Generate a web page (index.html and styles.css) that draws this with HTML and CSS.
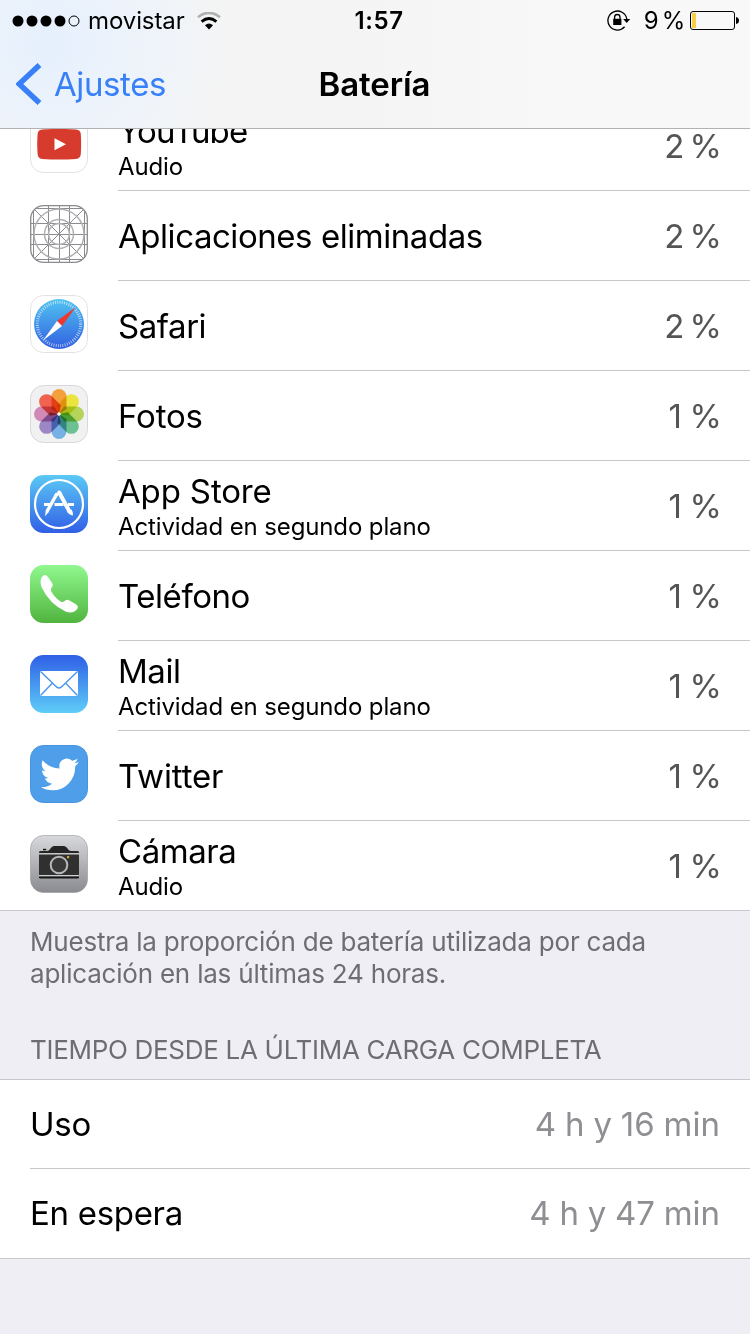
FILE: index.html
```html
<!DOCTYPE html>
<html lang="es">
<head>
    <meta charset="UTF-8">
    <meta name="viewport" content="width=device-width, initial-scale=1.0">
    <title>Batería</title>
    <link rel="stylesheet" href="styles.css">
</head>
<body>
    <header>
        <div class="status">
            <div class="status-left">
                <svg width="68" height="12" viewBox="0 0 68 12">
                    <circle cx="6" cy="6" r="5.5"/>
                    <circle cx="20" cy="6" r="5.5"/>
                    <circle cx="34" cy="6" r="5.5"/>
                    <circle cx="48" cy="6" r="5.5"/>
                    <circle cx="62" cy="6" r="5" fill="none" stroke="#000"/>
                </svg>
                <span class="carrier">movistar</span>
                <svg class="wifi" width="24" height="18" viewBox="0 0 24 18">
                    <path d="M1 5.2Q12 -3.6 23 5.2" fill="none" stroke="#b0b0b0" stroke-width="2.6"/>
                    <path d="M4.6 9.6Q12 3.4 19.4 9.6" fill="none" stroke="#000" stroke-width="2.8"/>
                    <path d="M8 13.2Q12 10 16 13.2L12 17.6Z"/>
                </svg>
            </div>
            <span class="clock">1:57</span>
            <div class="status-right">
                <svg width="24" height="21" viewBox="0 0 24 21">
                    <path d="M17.6 16.8A9.5 9.5 0 1 1 19.8 9" fill="none" stroke="#000" stroke-width="1.3"/>
                    <path d="M16.2 9h7l-3.5 4z"/>
                    <rect x="6.2" y="8.8" width="8.2" height="6.2"/>
                    <path d="M7.6 9V7.2a2.7 2.7 0 0 1 5.4 0V9" fill="none" stroke="#000" stroke-width="1.3"/>
                </svg>
                <span class="percent">9 %</span>
                <svg class="battery" width="49" height="19" viewBox="0 0 49 19">
                    <rect x=".5" y=".5" width="44" height="18" rx="2.5" fill="none" stroke="#000"/>
                    <rect x="2" y="2" width="4" height="15" fill="#f9cd46"/>
                    <path d="M46 6q3 .5 3 3.500t-3 3.500z"/>
                </svg>
            </div>
        </div>
        <div class="nav">
            <div class="back">
                <svg width="26" height="42" viewBox="0 0 26 42">
                    <path d="M23.500 2L3.200 21L23.500 40" fill="none" stroke="#3880f7" stroke-width="5.500"/>
                </svg>
                <span>Ajustes</span>
            </div>
            <h1>Batería</h1>
        </div>
    </header>

    <main>
        <ul class="apps">
            <li class="app">
                <svg class="icon" viewBox="0 0 58 58">
                    <rect x=".5" y=".5" width="57" height="57" rx="13" fill="#fff" stroke="#e2e2e2"/>
                    <path d="M12 14.600Q29 13.200 46 14.600Q50.400 15 50.800 19Q51.500 29 50.800 39Q50.400 43.600 46 44Q29 45 12 44Q8 43.600 7.600 39Q6.900 29 7.600 19Q8 15 12 14.600Z" fill="#d63b2e"/>
                    <path d="M24.500 23.200V35.200L36 29.200Z" fill="#fff"/>
                </svg>
                <div class="row">
                    <div class="names"><span class="name youtube">YouTube</span><span class="detail">Audio</span></div>
                    <span class="value two">2 %</span>
                </div>
            </li>
            <li class="app">
                <svg class="icon" viewBox="0 0 58 58">
                    <g fill="none" stroke="#8b8b8f">
                        <rect x=".7" y=".7" width="56.600" height="56.600" rx="13" stroke-width="1.300"/>
                        <path d="M3.500 5V53M18.500 1V57M29.500 1V57M39.500 1V57M54.500 5V53M5 3.500H53M1 18.500H57M1 29.500H57M1 39.500H57M5 54.500H53" stroke-width="1"/>
                        <path d="M4 4L54 54M54 4L4 54" stroke-width="1"/>
                        <g stroke="#b0b0b3" stroke-width="1.500">
                            <circle cx="29" cy="29" r="25"/>
                            <circle cx="29" cy="29" r="14.500"/>
                            <circle cx="29" cy="29" r="10.500"/>
                        </g>
                    </g>
                </svg>
                <div class="row">
                    <div class="names"><span class="name">Aplicaciones eliminadas</span></div>
                    <span class="value two">2 %</span>
                </div>
            </li>
            <li class="app">
                <svg class="icon" viewBox="0 0 58 58">
                    <defs>
                        <linearGradient id="safari" x1="0" y1="0" x2="0" y2="1">
                            <stop offset="0" stop-color="#51c3f1"/>
                            <stop offset="1" stop-color="#3260e1"/>
                        </linearGradient>
                    </defs>
                    <rect x=".5" y=".5" width="57" height="57" rx="13" fill="#fff" stroke="#e2e2e2"/>
                    <circle cx="29" cy="29" r="25" fill="url(#safari)"/>
                    <circle cx="29" cy="29" r="21.700" fill="none" stroke="#fff" stroke-opacity=".7" stroke-width="3" stroke-dasharray=".8 1.472"/>
                    <path d="M45.600 12.200L27 26L32 31Z" fill="#f0372d"/>
                    <path d="M13 45.500L27 26L32 31Z" fill="#fff"/>
                </svg>
                <div class="row">
                    <div class="names"><span class="name">Safari</span></div>
                    <span class="value two">2 %</span>
                </div>
            </li>
            <li class="app">
                <svg class="icon" viewBox="0 0 58 58">
                    <defs>
                        <path id="petal" d="M21.500 11.500a7.500 7.500 0 0 1 15 0V24L29 29L21.500 24Z"/>
                    </defs>
                    <rect x=".5" y=".5" width="57" height="57" rx="13" fill="#f1f1f2" stroke="#d8d8da"/>
                    <g class="petals">
                        <use href="#petal" fill="#f4a13d"/>
                        <use href="#petal" fill="#ebe43e" transform="rotate(45 29 29)"/>
                        <use href="#petal" fill="#b6d45a" transform="rotate(90 29 29)"/>
                        <use href="#petal" fill="#6cc092" transform="rotate(135 29 29)"/>
                        <use href="#petal" fill="#76b1e4" transform="rotate(180 29 29)"/>
                        <use href="#petal" fill="#9c87c4" transform="rotate(225 29 29)"/>
                        <use href="#petal" fill="#d18ab5" transform="rotate(270 29 29)"/>
                        <use href="#petal" fill="#ef6350" transform="rotate(315 29 29)"/>
                    </g>
                    <circle cx="29" cy="29" r="1.800" fill="#fff"/>
                </svg>
                <div class="row">
                    <div class="names"><span class="name wide">Fotos</span></div>
                    <span class="value">1 %</span>
                </div>
            </li>
            <li class="app">
                <svg class="icon" viewBox="0 0 58 58">
                    <defs>
                        <linearGradient id="store" x1="0" y1="0" x2="0" y2="1">
                            <stop offset="0" stop-color="#5bc9f5"/>
                            <stop offset="1" stop-color="#315fe6"/>
                        </linearGradient>
                    </defs>
                    <rect width="58" height="58" rx="13.500" fill="url(#store)"/>
                    <circle cx="29" cy="29" r="24" fill="none" stroke="#fff" stroke-width="2.200"/>
                    <path d="M14 29.600H20M24.500 29.600H33.500M38 29.600H44" stroke="#fff" stroke-width="3"/>
                    <path d="M26.500 19.500L17 36.500" stroke="#fff" stroke-width="3.400"/>
                    <circle cx="26.500" cy="19.500" r="1.800" fill="#fff"/>
                    <path d="M15.800 35.500L18.800 37L15 41.200Z" fill="#fff"/>
                    <path d="M29.200 17.500L38.300 34.300" stroke="#fff" stroke-width="4" stroke-linecap="round"/>
                    <path d="M36.700 36Q39 33.400 41.500 34.500Q43.400 37 43 40.500Q38.500 39.600 36.700 36Z" fill="#fff"/>
                </svg>
                <div class="row">
                    <div class="names"><span class="name wide">App Store</span><span class="detail">Actividad en segundo plano</span></div>
                    <span class="value">1 %</span>
                </div>
            </li>
            <li class="app">
                <svg class="icon" viewBox="0 0 58 58">
                    <defs>
                        <linearGradient id="phone" x1="0" y1="0" x2="0" y2="1">
                            <stop offset="0" stop-color="#90f88e"/>
                            <stop offset="1" stop-color="#50b43e"/>
                        </linearGradient>
                    </defs>
                    <rect width="58" height="58" rx="13.500" fill="url(#phone)"/>
                    <path d="M13 10.700Q15.800 9 18 12L22.300 18.200Q23.600 20.300 22 22Q20 24.200 21.200 26.300Q24.500 32.500 30.500 36.500Q32.800 37.600 35 35.700Q36.800 34 39 35.200L46 39.200Q49.200 41.400 47 44.200Q42.700 49.200 35.600 46.600Q19.600 39.200 11.600 22.300Q9 14.500 13 10.700Z" fill="#fff"/>
                </svg>
                <div class="row">
                    <div class="names"><span class="name">Teléfono</span></div>
                    <span class="value">1 %</span>
                </div>
            </li>
            <li class="app">
                <svg class="icon" viewBox="0 0 58 58">
                    <defs>
                        <linearGradient id="mail" x1="0" y1="0" x2="0" y2="1">
                            <stop offset="0" stop-color="#2f5fe6"/>
                            <stop offset="1" stop-color="#5fcdf8"/>
                        </linearGradient>
                    </defs>
                    <rect width="58" height="58" rx="13.500" fill="url(#mail)"/>
                    <rect x="10" y="16" width="38" height="25" rx="1" fill="#fff"/>
                    <path d="M10.500 16.500L25.500 31Q29 35 32.500 31L47.500 16.500M10.500 40.500L22 28.600M47.500 40.500L36 28.600" fill="none" stroke="#4697ee" stroke-width="1.400"/>
                </svg>
                <div class="row">
                    <div class="names"><span class="name">Mail</span><span class="detail">Actividad en segundo plano</span></div>
                    <span class="value">1 %</span>
                </div>
            </li>
            <li class="app">
                <svg class="icon" viewBox="0 0 58 58">
                    <rect x=".5" y=".5" width="57" height="57" rx="13" fill="#4f9eea" stroke="#4793dd"/>
                    <path d="M12.600 15.300Q19.500 23.200 29.600 23.500Q28.400 18 32 15.200Q37.300 11.600 42.200 15.800Q45 15.300 47.600 13.800Q46.800 16.600 44.500 18.200Q46.800 18 48.800 17Q47.300 19.600 45.200 21.200Q45.400 32 38.200 39Q31.600 45.500 22.500 45.300Q16 45.200 11 42Q17.500 42.400 22 38.700Q16.500 38 14.900 33.300Q16.800 33.600 18.300 33.100Q12.200 31.300 12 25.300Q13.700 26.200 15.500 26.200Q10 21.800 12.600 15.300Z" fill="#fff"/>
                </svg>
                <div class="row">
                    <div class="names"><span class="name wide">Twitter</span></div>
                    <span class="value">1 %</span>
                </div>
            </li>
            <li class="app">
                <svg class="icon" viewBox="0 0 58 58">
                    <defs>
                        <linearGradient id="camera" x1="0" y1="0" x2="0" y2="1">
                            <stop offset="0" stop-color="#d8d9dc"/>
                            <stop offset="1" stop-color="#8a8b90"/>
                        </linearGradient>
                    </defs>
                    <rect x=".5" y=".5" width="57" height="57" rx="13" fill="url(#camera)" stroke="#97989b" stroke-opacity=".6"/>
                    <rect x="13" y="13.800" width="3.200" height="1.500" fill="#111"/>
                    <path d="M9 18.200V17.400Q9 16 11 16H17Q19 16 20.500 13.500Q22 11 24 11H34Q36 11 37.500 13.500Q39 16 41 16H47Q49 16 49 17.400V18.200Z" fill="#252525"/>
                    <rect x="9" y="19.300" width="40" height="20.700" fill="#303031"/>
                    <path d="M9 41.300H49V42.300Q49 43.500 47.500 43.500H10.500Q9 43.500 9 42.300Z" fill="#161616"/>
                    <path d="M9 18.800H49M9 40.700H49" stroke="#d9dadb" stroke-width="1"/>
                    <circle cx="29" cy="30" r="10" fill="#303031"/>
                    <circle cx="29" cy="30" r="8.300" fill="#39393a" stroke="#b6b7b9" stroke-width="2"/>
                    <rect x="37" y="21" width="2.200" height="2.200" fill="#d9a634"/>
                </svg>
                <div class="row">
                    <div class="names"><span class="name">Cámara</span><span class="detail">Audio</span></div>
                    <span class="value">1 %</span>
                </div>
            </li>
        </ul>

        <p class="note">Muestra la proporción de batería utilizada por cada<br>aplicación en las últimas 24 horas.</p>
        <h2>TIEMPO DESDE LA ÚLTIMA CARGA COMPLETA</h2>

        <ul class="times">
            <li><span class="label">Uso</span><span class="time">4 h y 16 min</span></li>
            <li><span class="label">En espera</span><span class="time standby">4 h y 47 min</span></li>
        </ul>
    </main>
</body>
</html>
```
FILE: styles.css
```css
* {
    box-sizing: border-box;
}

body {
    font-family: Inter, Roboto, sans-serif;
    margin: 0;
    height: 1334px;
    overflow: hidden;
    background-color: #efeef4;
    color: #000;
}

ul {
    list-style: none;
    margin: 0;
    padding: 0;
}

svg {
    display: block;
    flex: none;
}

span {
    white-space: nowrap;
}

header {
    height: 129px;
    border-bottom: 1px solid #b2b2b4;
    background: radial-gradient(circle at 50px 45px, #e5f0fd 0, #edf3fb 80px, rgba(244, 244, 245, 0) 180px), linear-gradient(to right, #f4f4f4 45%, #f8f8f8 75%);
}

.status {
    display: grid;
    grid-template-columns: 1fr auto 1fr;
    align-items: center;
    height: 41px;
    padding: 0 11px 0 12px;
    font-size: 24px;
}

.status-left, .status-right {
    display: flex;
    align-items: center;
}

.status-right {
    justify-content: flex-end;
}

.carrier {
    margin-left: 8px;
    letter-spacing: -0.1px;
}

.wifi {
    margin-left: 12px;
}

.clock {
    font-weight: 600;
    letter-spacing: 0.6px;
    padding-left: 7px;
}

.percent {
    margin-left: 13px;
    letter-spacing: -0.3px;
    word-spacing: -3px;
}

.battery {
    margin-left: 5px;
}

.nav {
    display: grid;
    grid-template-columns: 1fr auto 1fr;
    align-items: center;
    height: 86px;
    padding: 0 17px 0 16px;
}

.back {
    display: flex;
    align-items: center;
    gap: 12px;
    font-size: 33px;
    letter-spacing: -0.4px;
    color: #3880f7;
}

h1 {
    margin: 0;
    font-size: 33px;
    font-weight: 600;
    letter-spacing: -0.1px;
}

main {
    overflow: hidden;
}

/* the list is scrolled a little under the header */
.apps {
    margin-top: -28px;
    background-color: #fff;
    border-bottom: 1px solid #c8c7cc;
}

.app {
    display: flex;
    height: 90px;
    padding-left: 30px;
}

.app:last-child {
    height: 89px;
}

.icon {
    width: 58px;
    height: 58px;
    margin: 14px 30px 0 0;
}

.petals {
    isolation: isolate;
}

.petals use {
    mix-blend-mode: multiply;
}

.row {
    flex: 1;
    display: flex;
    align-items: center;
    justify-content: space-between;
    border-bottom: 1px solid #c8c7cc;
    padding-right: 28px;
}

.app:last-child .row {
    border-bottom: 0;
}

.names {
    display: flex;
    flex-direction: column;
}

.name {
    font-size: 33px;
    line-height: 40px;
    letter-spacing: -0.45px;
}

.wide {
    letter-spacing: -0.15px;
}

.youtube {
    letter-spacing: -0.85px;
}

.detail {
    font-size: 24px;
    line-height: 32px;
    letter-spacing: -0.12px;
    margin-bottom: -2px;
}

.value {
    font-size: 33px;
    word-spacing: -1.5px;
    color: #555;
}

.two {
    word-spacing: -4px;
}

.note {
    margin: 0;
    padding: 15px 30px 0;
    height: 107px;
    font-size: 26px;
    line-height: 32px;
    letter-spacing: -0.21px;
    color: #6d6d72;
}

h2 {
    margin: 0;
    padding: 16px 30px 0;
    height: 61px;
    font-size: 26px;
    line-height: 32px;
    font-weight: 400;
    letter-spacing: -0.3px;
    color: #6d6d72;
}

.times {
    background-color: #fff;
    border-top: 1px solid #c8c7cc;
    border-bottom: 1px solid #c8c7cc;
}

.times li {
    display: flex;
    align-items: center;
    justify-content: space-between;
    height: 88px;
    margin-left: 30px;
    padding: 0 30px 1px 0;
    font-size: 33px;
}

.times li + li {
    height: 90px;
    border-top: 1px solid #c8c7cc;
}

.label {
    letter-spacing: -0.3px;
}

.time {
    word-spacing: -0.4px;
    color: #8e8e93;
}

.standby {
    letter-spacing: -0.05px;
}
```
